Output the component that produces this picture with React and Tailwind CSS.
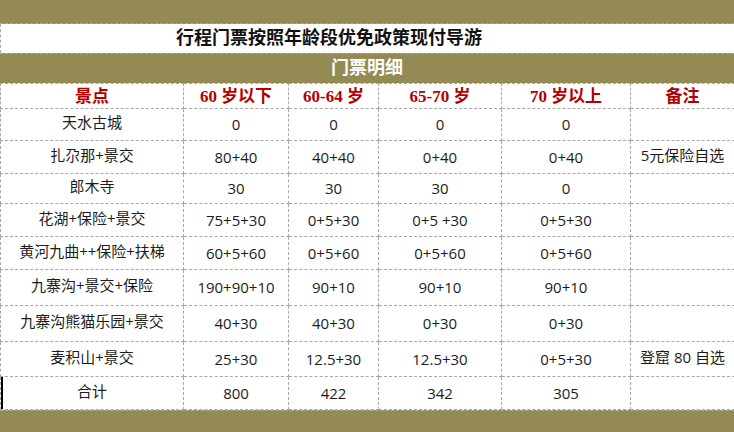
const rows = [
  { name: "天水古城", a: "0", b: "0", c: "0", d: "0", note: "", h: "h-[32px]" },
  { name: "扎尕那+景交", a: "80+40", b: "40+40", c: "0+40", d: "0+40", note: "5元保险自选", h: "h-[33px]" },
  { name: "郎木寺", a: "30", b: "30", c: "30", d: "0", note: "", h: "h-[30px]" },
  { name: "花湖+保险+景交", a: "75+5+30", b: "0+5+30", c: "0+5 +30", d: "0+5+30", note: "", h: "h-[33px]" },
  { name: "黄河九曲++保险+扶梯", a: "60+5+60", b: "0+5+60", c: "0+5+60", d: "0+5+60", note: "", h: "h-[33px]" },
  { name: "九寨沟+景交+保险", a: "190+90+10", b: "90+10", c: "90+10", d: "90+10", note: "", h: "h-[36px]" },
  { name: "九寨沟熊猫乐园+景交", a: "40+30", b: "40+30", c: "0+30", d: "0+30", note: "", h: "h-[36px]" },
  { name: "麦积山+景交", a: "25+30", b: "12.5+30", c: "12.5+30", d: "0+5+30", note: "登窟 80 自选", h: "h-[35px]" },
  { name: "合计", a: "800", b: "422", c: "342", d: "305", note: "", h: "h-[33px]" },
];

const heads = ["景点", "60 岁以下", "60-64 岁", "65-70 岁", "70 岁以上", "备注"];
const widths = ["w-[183px]", "w-[105px]", "w-[90px]", "w-[123px]", "w-[129px]", "w-[104px]"];

const cell = "border border-dashed border-[#a8a8a8] text-center align-middle p-0";

export default function App() {
  return (
    <div className="w-[734px] h-[432px] bg-white flex flex-col overflow-hidden font-['Open_Sans','Noto_Sans_CJK_SC',sans-serif] text-[#1c1c1c]">
      <div className="h-[24px] shrink-0 bg-[#948a54] border-b border-dashed border-[#a8a8a8]" />
      <div className="h-[29px] shrink-0 flex items-center pl-[175px] border-l border-dashed border-[#a8a8a8] font-['Liberation_Serif','Noto_Sans_CJK_SC',serif] font-bold text-[18px] text-[#111]">
        行程门票按照年龄段优免政策现付导游
      </div>
      <div className="h-[30px] shrink-0 bg-[#948a54] flex items-center justify-center border-t border-dashed border-[#a8a8a8] font-['Liberation_Serif','Noto_Sans_CJK_SC',serif] font-bold text-[18px] text-white">
        门票明细
      </div>
      <table className="w-[734px] table-fixed border-collapse shrink-0">
        <thead>
          <tr className="h-[25px]">
            {heads.map((h, i) => (
              <th key={h} className={`${cell} ${widths[i]} font-['Liberation_Serif','Noto_Sans_CJK_SC',serif] font-bold text-[17px] leading-none text-[#b40000]`}>
                {h}
              </th>
            ))}
          </tr>
        </thead>
        <tbody className="text-[15px] leading-none">
          {rows.map((r, i) => (
            <tr key={r.name} className={r.h}>
              <td className={`${cell} ${i === rows.length - 1 ? "shadow-[inset_2px_0_0_#000]" : ""}`}>
                <span className="relative top-[-2px]">{r.name}</span>
              </td>
              <td className={cell}>{r.a}</td>
              <td className={cell}>{r.b}</td>
              <td className={cell}>{r.c}</td>
              <td className={cell}>{r.d}</td>
              <td className={cell}>
                <span className="relative top-[-2px]">{r.note}</span>
              </td>
            </tr>
          ))}
        </tbody>
      </table>
      <div className="flex-1 bg-[#948a54] border-t border-dashed border-[#a8a8a8]" />
    </div>
  );
}
